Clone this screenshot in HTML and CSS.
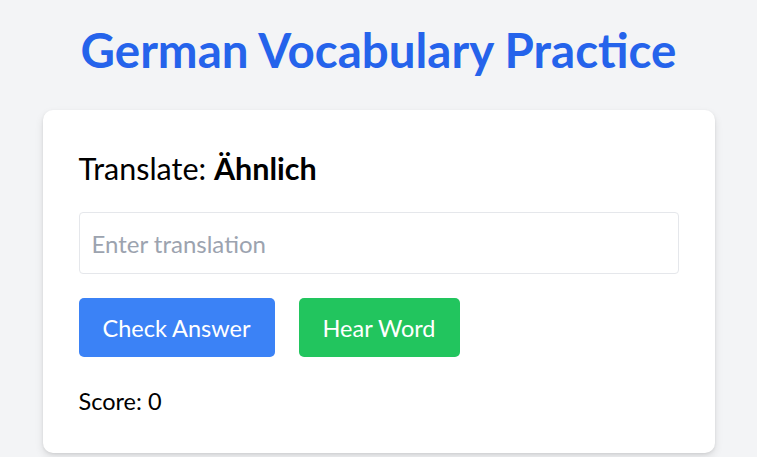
FILE: index.html
```html
<!DOCTYPE html>
<html lang="en">
<head>
<meta charset="utf-8">
<title>German Vocabulary Practice</title>
<link rel="stylesheet" href="styles.css">
</head>
<body>
<main class="page">
  <h1 class="title">German Vocabulary Practice</h1>
  <section class="card">
    <h2 class="prompt">Translate: <strong class="word">Ähnlich</strong></h2>
    <input class="answer" type="text" placeholder="Enter translation">
    <div class="actions">
      <button class="btn btn-blue" type="button">Check Answer</button>
      <button class="btn btn-green" type="button">Hear Word</button>
    </div>
    <p class="score">Score: 0</p>
  </section>
</main>
</body>
</html>
```

FILE: styles.css
```css
* { box-sizing: border-box; }
html, body { margin: 0; padding: 0; }
body {
  background: #f3f4f6;
  font-family: Lato, "Noto Sans", sans-serif;
  color: #000;
  height: 457px;
  overflow: hidden;
}
.page {
  padding-top: 22px;
}
.title {
  margin: 0 0 32px;
  text-align: center;
  font-size: 47.5px;
  line-height: 56px;
  font-weight: 700;
  color: #2563eb;
}
.card {
  width: 672px;
  margin: 0 auto;
  background: #fff;
  border-radius: 10px;
  box-shadow: 0 4px 8px rgba(0,0,0,0.10), 0 1px 3px rgba(0,0,0,0.08);
  padding: 40px 36px 38px;
}
.prompt {
  margin: 0 0 26px;
  font-size: 30.5px;
  line-height: 36px;
  font-weight: 400;
}
.word { font-weight: 700; }
.answer {
  display: block;
  width: 100%;
  height: 62px;
  padding: 0 12px;
  border: 1px solid #e5e7eb;
  border-radius: 4px;
  font-family: inherit;
  font-size: 24px;
  color: #111;
  outline: none;
}
.answer::placeholder { color: #9ca3af; }
.actions {
  display: flex;
  gap: 24px;
  margin-top: 24px;
}
.btn {
  height: 59px;
  padding: 0 24px;
  border: 0;
  border-radius: 5px;
  font-family: inherit;
  font-size: 23.5px;
  color: #fff;
}
.btn-blue { background: #3b82f6; }
.btn-green { background: #22c55e; }
.score {
  margin: 30px 0 0;
  font-size: 23.5px;
  line-height: 28px;
}
```
